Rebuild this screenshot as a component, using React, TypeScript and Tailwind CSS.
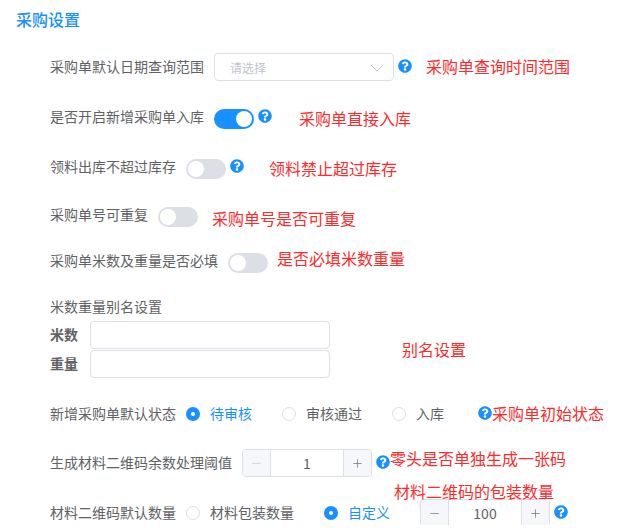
import React from 'react';
import { FaQuestionCircle } from 'react-icons/fa';
import { ChevronDown, Minus, Plus } from 'lucide-react';

const Help = ({ className = '' }: { className?: string }) => (
  <FaQuestionCircle className={`w-[14px] h-[14px] shrink-0 text-[#1890ff] ${className}`} />
);

const Note = ({ text, className = '' }: { text: string; className?: string }) => (
  <span className={`text-[16px] leading-[22px] whitespace-nowrap text-[#ff2a2a] ${className}`}>{text}</span>
);

const Label = ({ text, className = '' }: { text: string; className?: string }) => (
  <span className={`-mt-[2px] ${className}`}>{text}</span>
);

const Toggle = ({ on = false }: { on?: boolean }) => (
  <div className={`w-10 h-5 rounded-full p-[2px] flex shrink-0 ${on ? 'bg-[#1890ff] justify-end' : 'bg-[#dcdfe6] justify-start'}`}>
    <div className="w-4 h-4 rounded-full bg-white" />
  </div>
);

const Radio = ({ label, on = false, className = '' }: { label: string; on?: boolean; className?: string }) => (
  <div className={`flex items-center shrink-0 ${className}`}>
    {on ? (
      <div className="w-[14px] h-[14px] rounded-full bg-[#1890ff] flex items-center justify-center">
        <div className="w-1 h-1 rounded-full bg-white" />
      </div>
    ) : (
      <div className="w-[14px] h-[14px] rounded-full border border-[#dcdfe6] bg-white" />
    )}
    <span className={`ml-[10px] -mt-[2px] ${on ? 'text-[#1890ff]' : 'text-[#606266]'}`}>{label}</span>
  </div>
);

const Stepper = ({ value, muted = false }: { value: number; muted?: boolean }) => (
  <div className="w-[130px] h-7 flex shrink-0 rounded border border-[#dcdfe6] overflow-hidden">
    <div className="w-7 shrink-0 bg-[#f5f7fa] border-r border-[#dcdfe6] flex items-center justify-center">
      <Minus size={13} strokeWidth={1.2} className={muted ? 'text-[#c0c4cc]' : 'text-[#606266]'} />
    </div>
    <div className="flex-1 flex items-center justify-center text-[#606266]">{value}</div>
    <div className="w-7 shrink-0 bg-[#f5f7fa] border-l border-[#dcdfe6] flex items-center justify-center">
      <Plus size={13} strokeWidth={1.2} className="text-[#606266]" />
    </div>
  </div>
);

const Row = ({ className = '', children }: { className?: string; children: React.ReactNode }) => (
  <div className={`h-7 flex items-center ${className}`}>{children}</div>
);

export default function App() {
  return (
    <div className="w-[634px] h-[530px] bg-white">
      <div
        className="relative h-[525px] overflow-hidden text-[14px] text-[#606266]"
        style={{ fontFamily: '"Noto Sans CJK SC", sans-serif' }}
      >
        <div className="pt-2 pl-4 text-[16px] leading-[22px] font-medium text-[#1890ff]">采购设置</div>

        <div className="pl-[50px]">
          <Row className="mt-[23px]">
            <Label text="采购单默认日期查询范围" />
            <div className="ml-[10px] w-[180px] h-7 rounded border border-[#dcdfe6] flex items-center justify-between pl-[15px] pr-1 text-[#c0c4cc]">
              <span className="text-[12px] mt-px">请选择</span>
              <ChevronDown size={24} strokeWidth={1} className="mt-px" />
            </div>
            <Help className="ml-1 -mt-[3px]" />
            <Note text="采购单查询时间范围" className="ml-[14px] -mt-[2px]" />
          </Row>

          <Row className="mt-[22px]">
            <Label text="是否开启新增采购单入库" />
            <div className="ml-[10px] mt-1"><Toggle on /></div>
            <Help className="ml-1 -mt-[2px]" />
            <Note text="采购单直接入库" className="ml-[27px] mt-[2px]" />
          </Row>

          <Row className="mt-[22px]">
            <Label text="领料出库不超过库存" />
            <div className="ml-[10px] mt-1"><Toggle /></div>
            <Help className="ml-1 -mt-[3px]" />
            <Note text="领料禁止超过库存" className="ml-[25px] mt-[2px]" />
          </Row>

          <Row className="mt-5">
            <Label text="采购单号可重复" />
            <div className="ml-[10px] mt-1"><Toggle /></div>
            <Note text="采购单号是否可重复" className="ml-[14px] mt-[6px]" />
          </Row>

          <Row className="mt-[18px]">
            <Label text="采购单米数及重量是否必填" />
            <div className="ml-[10px] mt-1"><Toggle /></div>
            <Note text="是否必填米数重量" className="ml-[9px] -mt-[6px]" />
          </Row>

          <Row className="mt-[18px]"><Label text="米数重量别名设置" /></Row>

          <div className="flex items-center">
            <div className="flex flex-col gap-px">
              <div className="h-7 flex items-center">
                <Label text="米数" className="w-10 font-bold" />
                <div className="w-60 h-7 rounded border border-[#dcdfe6]" />
              </div>
              <div className="h-7 flex items-center">
                <Label text="重量" className="w-10 font-bold" />
                <div className="w-60 h-7 rounded border border-[#dcdfe6]" />
              </div>
            </div>
            <Note text="别名设置" className="ml-[72px] -mt-[2px]" />
          </div>

          <Row className="mt-[22px]">
            <Label text="新增采购单默认状态" />
            <Radio label="待审核" on className="ml-[10px]" />
            <Radio label="审核通过" className="ml-[30px]" />
            <Radio label="入库" className="ml-[30px]" />
            <Help className="ml-[34px] -mt-[3px]" />
            <Note text="采购单初始状态" className="-mt-[2px]" />
          </Row>

          <Row className="mt-[21px]">
            <Label text="生成材料二维码余数处理阈值" />
            <div className="ml-[10px]"><Stepper value={1} muted /></div>
            <Help className="ml-1 -mt-[2px]" />
            <Note text="零头是否单独生成一张码" className="-mt-[10px]" />
          </Row>

          <Row className="mt-[22px]">
            <Label text="材料二维码默认数量" />
            <Radio label="材料包装数量" className="ml-[10px]" />
            <Radio label="自定义" on className="ml-[30px]" />
            <div className="ml-[30px]"><Stepper value={100} /></div>
            <Help className="ml-1 -mt-[2px]" />
          </Row>
        </div>

        <Note text="材料二维码的包装数量" className="absolute left-[394px] top-[480px]" />
      </div>
    </div>
  );
}
